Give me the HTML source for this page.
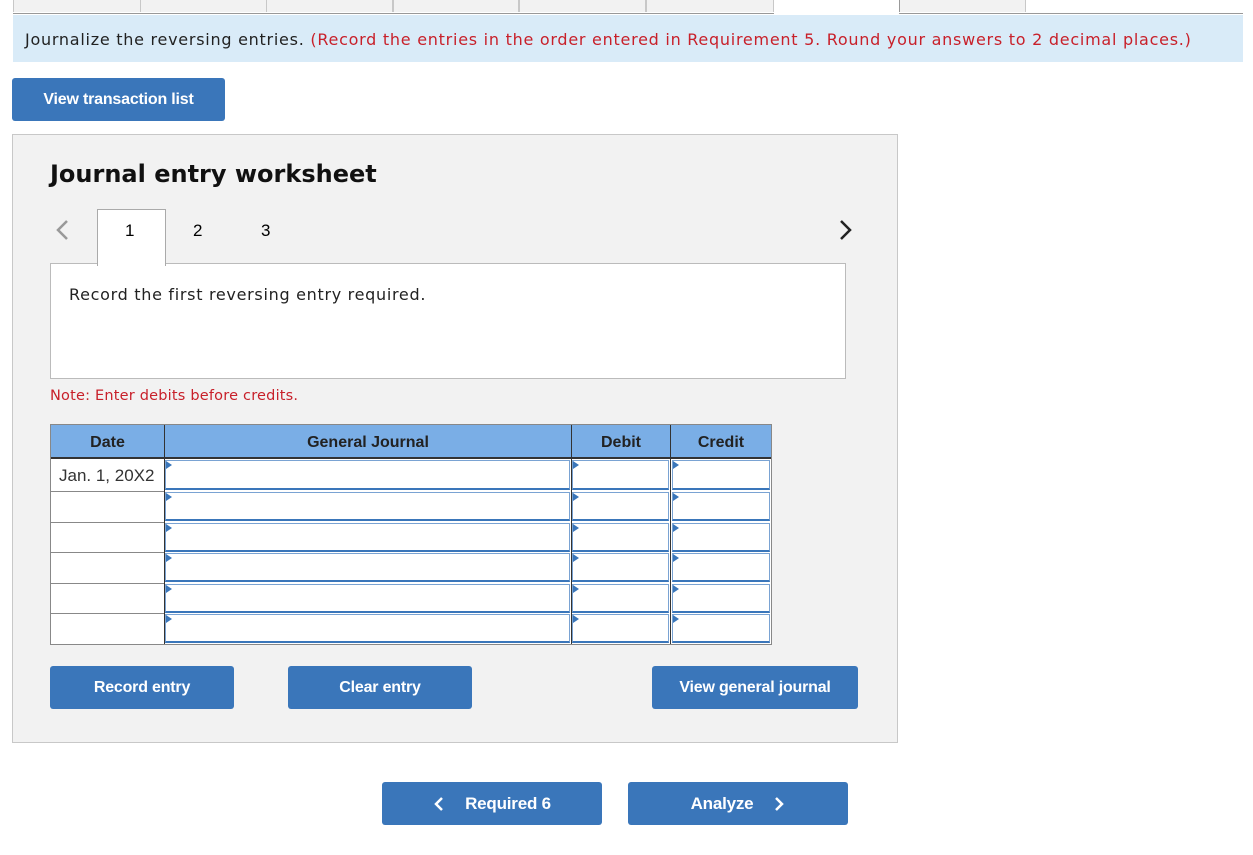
<!DOCTYPE html>
<html><head><meta charset="utf-8"><style>
body{margin:0;width:1253px;height:855px;background:#fff;font-family:"Liberation Sans",Arial,sans-serif;position:relative;overflow:hidden}
.a{position:absolute}
.tab{position:absolute;top:0;height:12px;background:#f2f2f2;border:1px solid #c8c8c8;border-top:none;border-bottom:none}
.btn{position:absolute;background:#3a76ba;color:#fff;font-weight:bold;font-size:16px;border-radius:3px;display:flex;align-items:center;justify-content:center;letter-spacing:-0.2px}
.inp{position:absolute;background:#fff;border:1px solid #7aa3d3;border-bottom:2px solid #3a76ba;box-sizing:border-box}
.inp:before{content:"";position:absolute;left:0;top:0;border-left:6px solid #3a76ba;border-top:4px solid transparent;border-bottom:4px solid transparent}
.v{font-family:"DejaVu Sans",Verdana,sans-serif}
.h{position:absolute;top:434px;text-align:center;font-size:16px;font-weight:bold;color:#222}
</style></head><body>
<div class="a" style="left:13px;top:13px;width:1230px;height:1px;background:#999"></div>
<div class="tab" style="left:13px;width:126px"></div>
<div class="tab" style="left:140px;width:125px"></div>
<div class="tab" style="left:266px;width:125px"></div>
<div class="tab" style="left:393px;width:124px"></div>
<div class="tab" style="left:519px;width:125px"></div>
<div class="tab" style="left:646px;width:126px"></div>
<div class="a" style="left:774px;top:0;width:125px;height:14px;background:#fff"></div>
<div class="tab" style="left:899px;width:125px;border-left:1px solid #999"></div>
<div class="a" style="left:13px;top:15px;width:1230px;height:47px;background:#d9ebf8"></div>
<div class="a v" style="left:25px;top:30px;font-size:16px;color:#222;white-space:nowrap;letter-spacing:0.74px">Journalize the reversing entries. <span style="color:#c8202a">(Record the entries in the order entered in Requirement 5. Round your answers to 2 decimal places.)</span></div>
<div class="btn" style="left:12px;top:78px;width:213px;height:43px">View transaction list</div>
<div class="a" style="left:12px;top:134px;width:884px;height:607px;background:#f2f2f2;border:1px solid #c8c8c8"></div>
<div class="a v" style="left:50px;top:160px;font-size:24px;font-weight:bold;color:#111">Journal entry worksheet</div>
<svg class="a" style="left:54px;top:219px" width="16" height="22"><path d="M13 2 L4 11 L13 20" stroke="#999" stroke-width="2.5" fill="none"/></svg>
<svg class="a" style="left:838px;top:219px" width="16" height="22"><path d="M3 2 L12 11 L3 20" stroke="#222" stroke-width="2.5" fill="none"/></svg>
<div class="a" style="left:50px;top:263px;width:794px;height:114px;background:#fff;border:1px solid #bbb"></div>
<div class="a" style="left:97px;top:209px;width:67px;height:56px;background:#fff;border:1px solid #aaa;border-bottom:none"></div>
<div class="a" style="left:125px;top:221px;font-size:17px">1</div>
<div class="a" style="left:193px;top:221px;font-size:17px">2</div>
<div class="a" style="left:261px;top:221px;font-size:17px">3</div>
<div class="a v" style="left:69px;top:285px;font-size:16px;color:#222;letter-spacing:0.7px">Record the first reversing entry required.</div>
<div class="a v" style="left:50px;top:388px;font-size:14.5px;color:#c8202a;letter-spacing:0.2px">Note: Enter debits before credits.</div>
<div class="a" style="left:50px;top:424px;width:722px;height:221px;background:#fff;border:1px solid #888;box-sizing:border-box"></div>
<div class="a" style="left:51px;top:425px;width:720px;height:34px;background:#7aaee6;border-bottom:2px solid #333;box-sizing:border-box"></div>
<div class="a" style="left:164px;top:425px;width:1px;height:219px;background:#333"></div>
<div class="a" style="left:571px;top:425px;width:1px;height:219px;background:#333"></div>
<div class="a" style="left:670px;top:425px;width:1px;height:219px;background:#333"></div>
<div class="h" style="left:51px;width:113px">Date</div>
<div class="h" style="left:165px;width:406px">General Journal</div>
<div class="h" style="left:572px;width:98px">Debit</div>
<div class="h" style="left:671px;width:100px">Credit</div>
<div class="a" style="left:59px;top:466px;font-size:17px;color:#333">Jan. 1, 20X2</div>
<div class="a" style="left:51px;top:491px;width:113px;height:1px;background:#888"></div>
<div class="a" style="left:51px;top:522px;width:113px;height:1px;background:#888"></div>
<div class="a" style="left:51px;top:552px;width:113px;height:1px;background:#888"></div>
<div class="a" style="left:51px;top:583px;width:113px;height:1px;background:#888"></div>
<div class="a" style="left:51px;top:613px;width:113px;height:1px;background:#888"></div>
<div class="inp" style="left:165px;top:460px;width:405px;height:30px"></div><div class="inp" style="left:572px;top:460px;width:97px;height:30px"></div><div class="inp" style="left:672px;top:460px;width:98px;height:30px"></div>
<div class="inp" style="left:165px;top:492px;width:405px;height:29px"></div><div class="inp" style="left:572px;top:492px;width:97px;height:29px"></div><div class="inp" style="left:672px;top:492px;width:98px;height:29px"></div>
<div class="inp" style="left:165px;top:523px;width:405px;height:29px"></div><div class="inp" style="left:572px;top:523px;width:97px;height:29px"></div><div class="inp" style="left:672px;top:523px;width:98px;height:29px"></div>
<div class="inp" style="left:165px;top:553px;width:405px;height:29px"></div><div class="inp" style="left:572px;top:553px;width:97px;height:29px"></div><div class="inp" style="left:672px;top:553px;width:98px;height:29px"></div>
<div class="inp" style="left:165px;top:584px;width:405px;height:29px"></div><div class="inp" style="left:572px;top:584px;width:97px;height:29px"></div><div class="inp" style="left:672px;top:584px;width:98px;height:29px"></div>
<div class="inp" style="left:165px;top:614px;width:405px;height:29px"></div><div class="inp" style="left:572px;top:614px;width:97px;height:29px"></div><div class="inp" style="left:672px;top:614px;width:98px;height:29px"></div>
<div class="btn" style="left:50px;top:666px;width:184px;height:43px">Record entry</div>
<div class="btn" style="left:288px;top:666px;width:184px;height:43px">Clear entry</div>
<div class="btn" style="left:652px;top:666px;width:206px;height:43px">View general journal</div>
<div class="btn" style="left:382px;top:782px;width:220px;height:43px;font-size:17px"><svg width="12" height="16" style="margin-right:20px"><path d="M9 2 L3 8 L9 14" stroke="#fff" stroke-width="2.5" fill="none"/></svg>Required 6</div>
<div class="btn" style="left:628px;top:782px;width:220px;height:43px;font-size:17px">Analyze<svg width="12" height="16" style="margin-left:20px"><path d="M3 2 L9 8 L3 14" stroke="#fff" stroke-width="2.5" fill="none"/></svg></div>
</body></html>
